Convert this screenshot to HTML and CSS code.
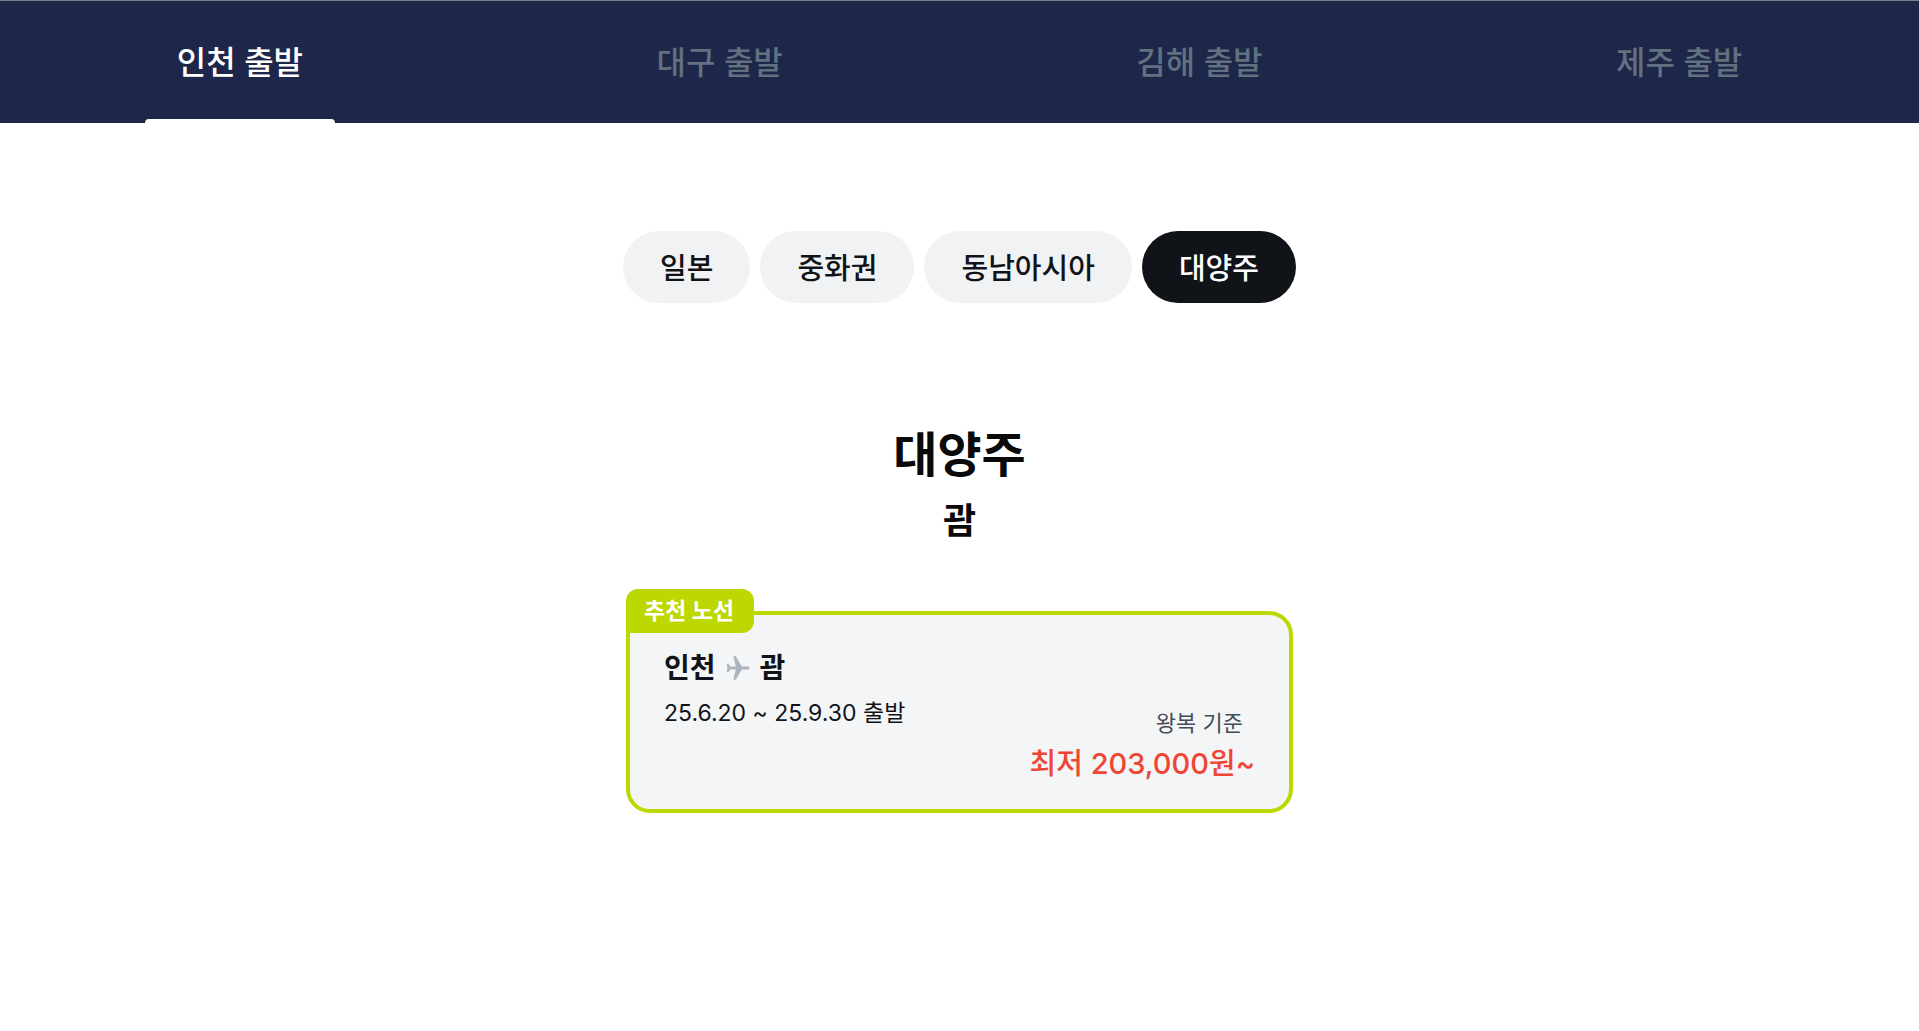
FILE: index.html
```
<!DOCTYPE html>
<html lang="ko">
<head>
    <meta charset="UTF-8">
    <meta name="viewport" content="width=device-width, initial-scale=1.0">
    <title>대양주 노선</title>
    <link rel="stylesheet" href="styles.css">
</head>
<body>
    <nav class="tabs">
        <button type="button" class="tab active">인천 출발</button>
        <button type="button" class="tab">대구 출발</button>
        <button type="button" class="tab">김해 출발</button>
        <button type="button" class="tab">제주 출발</button>
    </nav>

    <main>
        <div class="regions">
            <button type="button" class="region">일본</button>
            <button type="button" class="region">중화권</button>
            <button type="button" class="region">동남아시아</button>
            <button type="button" class="region active">대양주</button>
        </div>

        <h1>대양주</h1>
        <h2>괌</h2>

        <a href="#" class="card">
            <span class="badge">추천 노선</span>
            <span class="route">
                인천
                <svg class="plane" viewBox="0 0 24 24" aria-hidden="true">
                    <path d="M23.6 12c0-1-.9-1.6-2.2-1.6h-5.6L10.6 1.5C10.1.6 9.5.1 8.6.1c-.8 0-1.2.5-1 1.3l2.2 9H4.4L2.7 8.2C2.3 7.7.6 7.6.7 8.5L1.5 12l-.8 3.5c-.1.9 1.6.8 2 .3l1.7-2.2h5.4l-2.2 9c-.2.8.2 1.3 1 1.3.9 0 1.5-.5 2-1.4l5.2-8.9h5.6c1.3 0 2.2-.6 2.2-1.6z"/>
                </svg>
                괌
            </span>
            <span class="date">25.6.20 ~ 25.9.30 출발</span>
            <span class="basis">왕복 기준</span>
            <span class="price">최저 203,000원~</span>
        </a>
    </main>
</body>
</html>
```
FILE: styles.css
```
*{
    box-sizing: border-box;
}
body{
    margin: 0;
    background-color: #fff;
    color: #101317;
    font-family: Inter, "Noto Sans CJK KR", sans-serif;
}
button{
    border: none;
    font-family: inherit;
    font-weight: 500;
    cursor: pointer;
}
.tabs{
    display: grid;
    grid-template-columns: repeat(4, 1fr);
    background-color: #1e264a;
    border-top: 1px solid #738491;
}
.tab{
    display: flex;
    flex-direction: column;
    align-items: center;
    padding: 38px 0 0;
    background: none;
    color: #60717f;
    font-size: 32px;
    line-height: 48px;
}
.tab::after{
    content: "";
    width: 190px;
    height: 4px;
    margin-top: 32px;
    border-radius: 4px 4px 0 0;
}
.tab.active{
    color: #fff;
}
.tab.active::after{
    background-color: #fff;
}
main{
    display: flex;
    flex-direction: column;
    align-items: center;
    padding: 108px 24px;
}
.regions{
    display: flex;
    justify-content: center;
    flex-wrap: wrap;
    gap: 10px;
}
.region{
    padding: 16px 37px 12px;
    border-radius: 36px;
    background-color: #f1f2f4;
    color: #101317;
    font-size: 29px;
    line-height: 44px;
}
.region.active{
    background-color: #101317;
    color: #fff;
}
h1{
    margin: 116px 0 0;
    color: #0a0a0a;
    font-size: 48px;
    font-weight: 700;
    line-height: 72px;
}
h2{
    margin: 4px 0 0;
    color: #0a0a0a;
    font-size: 36px;
    font-weight: 600;
    line-height: 52px;
}
.card{
    position: relative;
    display: flex;
    flex-direction: column;
    width: 100%;
    max-width: 667px;
    margin-top: 64px;
    padding: 32px 34px 20px;
    border: 4px solid #bdd700;
    border-radius: 24px;
    background-color: #f4f5f7;
    color: #101317;
    text-decoration: none;
}
/* sits over the top border of the card */
.badge{
    position: absolute;
    top: -26px;
    left: -4px;
    padding: 4px 20px 4px 18px;
    border-radius: 12px 12px 12px 0;
    background-color: #bdd700;
    color: #fff;
    font-size: 23px;
    font-weight: 700;
    line-height: 36px;
}
.route{
    display: flex;
    align-items: center;
    gap: 10px;
    font-size: 28px;
    font-weight: 600;
    line-height: 42px;
}
.plane{
    width: 24px;
    height: 24px;
    fill: #acb5bd;
}
.date{
    margin-top: 6px;
    font-size: 23px;
    line-height: 36px;
}
.basis{
    align-self: flex-end;
    margin-right: 12px;
    margin-top: -24px;
    color: #454c53;
    font-size: 22px;
    line-height: 32px;
}
.price{
    align-self: flex-end;
    color: #f04434;
    font-size: 29px;
    font-weight: 500;
    line-height: 50px;
}
```
